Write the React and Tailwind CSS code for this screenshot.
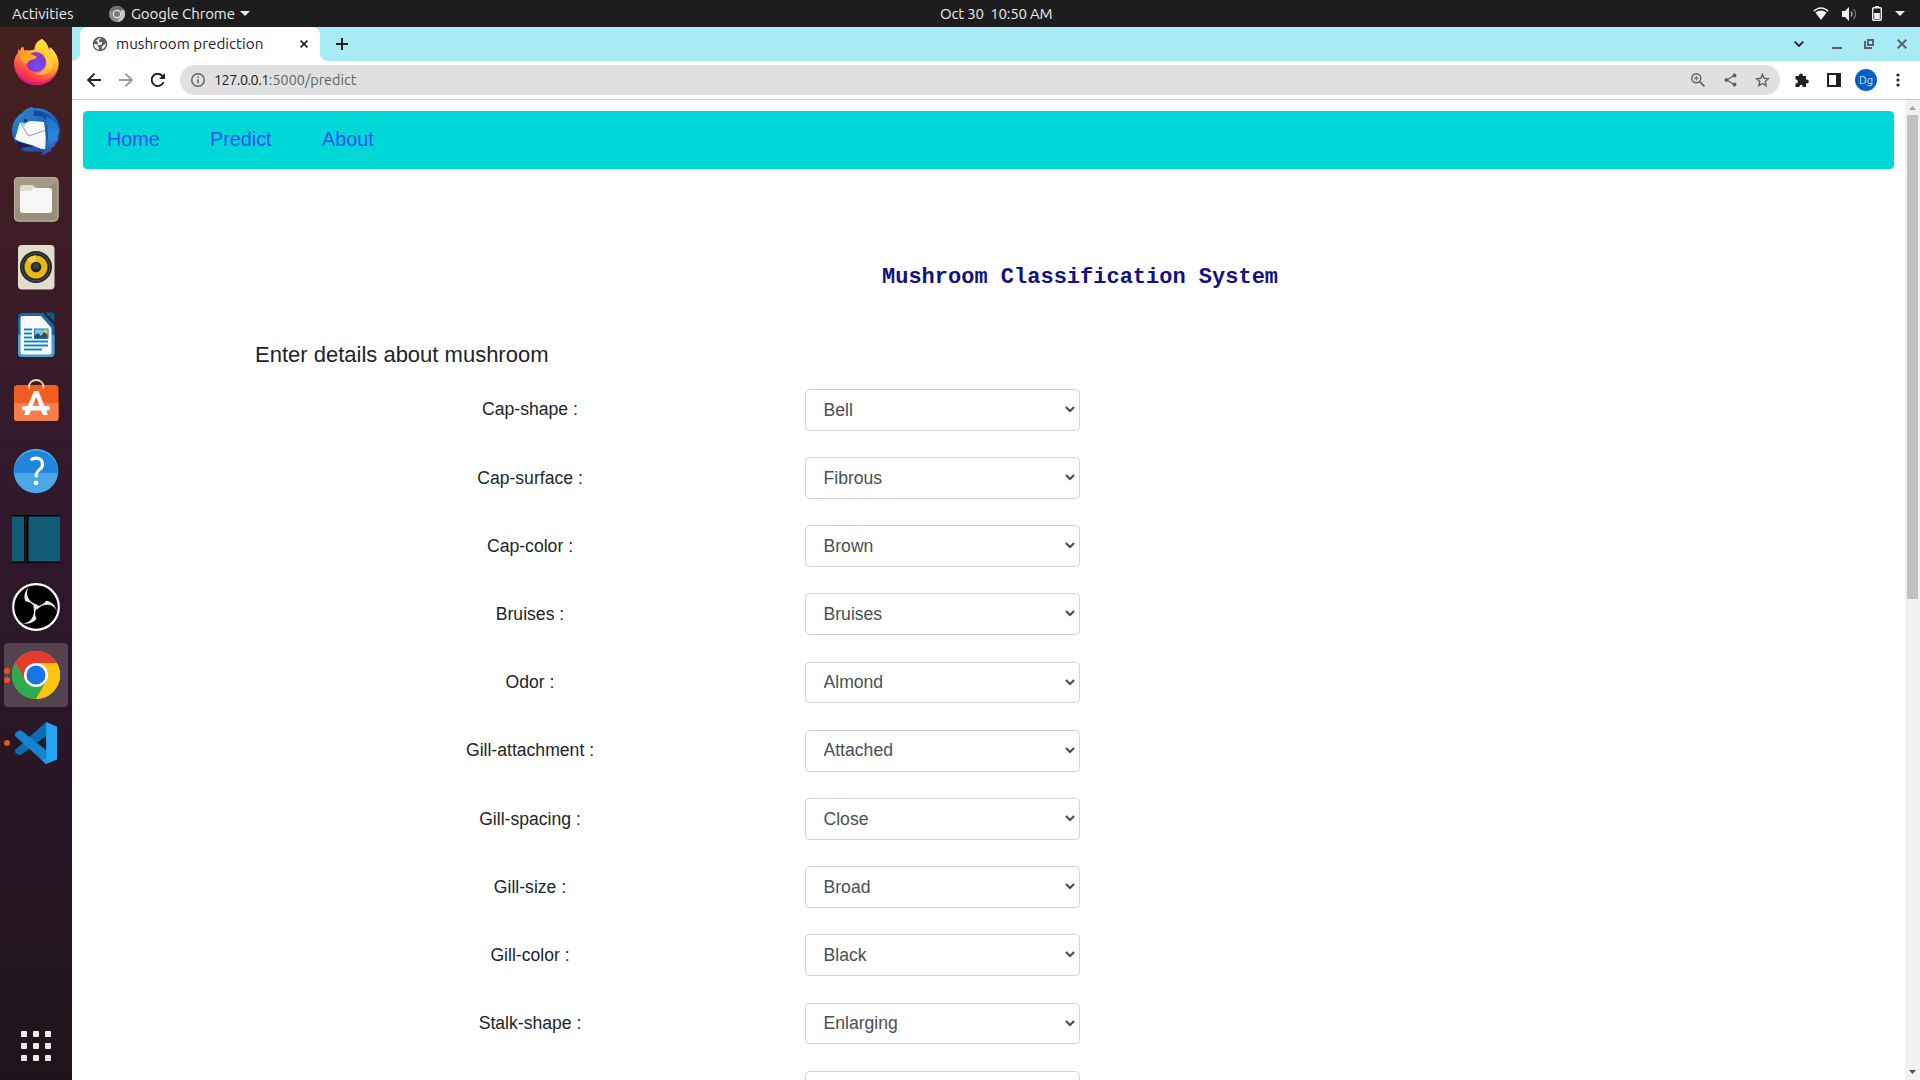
import React from "react";

const fields = [
  ["Cap-shape :", "Bell"],
  ["Cap-surface :", "Fibrous"],
  ["Cap-color :", "Brown"],
  ["Bruises :", "Bruises"],
  ["Odor :", "Almond"],
  ["Gill-attachment :", "Attached"],
  ["Gill-spacing :", "Close"],
  ["Gill-size :", "Broad"],
  ["Gill-color :", "Black"],
  ["Stalk-shape :", "Enlarging"],
  ["", ""],
];

function Svg({ size = 48, w, h, box = "0 0 48 48", className = "", children }) {
  return (
    <svg width={w || size} height={h || size} viewBox={box} fill="none" className={"block shrink-0 " + className}>
      {children}
    </svg>
  );
}

function Firefox() {
  return (
    <Svg>
      <defs>
        <linearGradient id="ffBody" x1="0.8" y1="0.1" x2="0.3" y2="1">
          <stop offset="0" stopColor="#fff04a" />
          <stop offset="0.3" stopColor="#ffbd2f" />
          <stop offset="0.6" stopColor="#ff7139" />
          <stop offset="0.82" stopColor="#ff3750" />
          <stop offset="1" stopColor="#e01586" />
        </linearGradient>
        <radialGradient id="ffGlobe" cx="0.6" cy="0.7" r="0.7">
          <stop offset="0" stopColor="#7a4bff" />
          <stop offset="0.6" stopColor="#7c3ad6" />
          <stop offset="1" stopColor="#a232c0" />
        </radialGradient>
        <linearGradient id="ffHead" x1="0" y1="0" x2="1" y2="1">
          <stop offset="0" stopColor="#ff9a1f" />
          <stop offset="1" stopColor="#ffb52e" />
        </linearGradient>
      </defs>
      <path d="M30 0c4 3 6 6 7 11l1-3c5 4 9 11 8.600 17C46 38 36 46 24.500 46 12 46 2 36.500 2 24c0-5 2-8 4-10l.2-4 2 2c.3-2 1.400-3.600 2.800-4.500l1.500 4.500c2-.8 3-.8 5.500-.5l4.500-1c0-2 .6-4.500 2-6.500 1.400-2 3-3 5.500-4z" fill="url(#ffBody)" />
      <circle cx="24" cy="23" r="10" fill="url(#ffGlobe)" />
      <path d="M8.500 12c3-1 6-.6 8.500.8 1.500 2.500 5 3.700 8 5-1 1.800-3 2.600-5 3-3 .6-4.500 2-5 4.200C10 24 7 18 8.500 12z" fill="url(#ffHead)" />
      <path d="M24.500 12.600c5-1 9.500 1 12 6-3-2-4.500-2-5.500-2 3 2 4 6 3.300 9.500C33 32 28 35 22 33.500c5 4 15 3 18.500-4.500C43 22 40 14 37 11 36 6 33 2 30 0c-4 2.500-6 7-5.500 12.600z" fill="#ffd53c" opacity="0.65" />
      <path d="M3 29c3 8 11 14 21 14s18-5 21-12c-2 9-11 15-21 15S4 39 3 29z" fill="#e5167c" opacity="0.7" />
    </Svg>
  );
}

function Thunderbird() {
  return (
    <Svg>
      <defs>
        <linearGradient id="tbBlue" x1="0.2" y1="0" x2="0.8" y2="1">
          <stop offset="0" stopColor="#2f8fd8" />
          <stop offset="0.5" stopColor="#1a62b8" />
          <stop offset="1" stopColor="#2b3f98" />
        </linearGradient>
        <linearGradient id="tbWing" x1="0" y1="0" x2="0" y2="1">
          <stop offset="0" stopColor="#1673cf" />
          <stop offset="0.55" stopColor="#2a8ad6" />
          <stop offset="1" stopColor="#2a4aa8" />
        </linearGradient>
      </defs>
      <path d="M20 0l2 1.500C35 0 48 10 48 24c0 9-4 14-8 17l-1 3-3 1-2 2-5 1 2-3C20 44 10 46 8 42l6 2C5 39 0 32 0 24 0 15 5 9 10 6 12 3 16 1 20 0z" fill="url(#tbBlue)" />
      <path d="M14 5C25 1 39 6 43 16l-2 5-3-4c-4-7-11-9-18-8z" fill="#154aa0" />
      <path d="M34 9c8 3 12 9 13 14l-2 8 1 2-4 4 1 2-4 2v3l-4 1-1 2-5 1c5-6 7-13 7-20 0-7-1-13-2-19z" fill="url(#tbWing)" />
      <path d="M3 32L8 15c4 1 8-1 12-1l12 1 1 7c1 8 1 14 0 20-3 1-8-2-13-4C13 36 7 35 3 32z" fill="#f7f7f8" />
      <path d="M8 15l8.500 14L33 23.500" stroke="#9b9ba2" strokeWidth="1" />
      <path d="M9 15c0-5 4-11 10-13 6 3 3 11-9 16z" fill="#2878c4" />
      <path d="M9 15l5 2-3 5z" fill="#9ddcf5" />
      <circle cx="13.500" cy="13.500" r="1.400" fill="#16294e" />
      <path d="M3 33c5 3 11 3 18 7-7 0-10 0-13 2z" fill="#201d52" />
    </Svg>
  );
}

function Files() {
  return (
    <Svg>
      <rect x="2" y="2" width="44.500" height="44.500" rx="4.500" fill="#a39b86" />
      <path d="M2 36L46 6v36a4.500 4.500 0 0 1-4.500 4.500h-35A4.500 4.500 0 0 1 2 42z" fill="#968e79" />
      <rect x="2.500" y="2.500" width="43.500" height="43.500" rx="4" stroke="#b9b29f" strokeWidth="1" />
      <path d="M8 13c0-1.700 1-3 3-3h9c2 0 2.500 3 4 3h13c2 0 3 1 3 3v8H8z" fill="#dedacd" />
      <path d="M8 17.500c0-1 .8-1.500 2-1.500h8c2 0 2-3 4.500-3H37c2 0 3 1 3 3v19c0 2-1 3-3 3H11c-2 0-3-1-3-3z" fill="#f8f7f5" />
    </Svg>
  );
}

function Rhythmbox() {
  return (
    <Svg>
      <rect x="6" y="2" width="36.500" height="44.500" rx="4" fill="#e3ddd0" />
      <circle cx="24" cy="24" r="16" fill="#23252a" />
      <circle cx="24" cy="24" r="14" stroke="#50545c" strokeWidth="1" />
      <circle cx="24" cy="24" r="11.500" fill="#e7b714" />
      <path d="M24 24L15 16.500a11.500 11.500 0 0 1 9-4z" fill="#f2d24b" />
      <circle cx="24" cy="24" r="5.300" fill="#1f2125" />
      <circle cx="24" cy="23" r="3.300" fill="#3b3e43" />
    </Svg>
  );
}

function Writer() {
  return (
    <Svg>
      <path d="M10 2h21l11.500 13v27a4 4 0 0 1-4 4H10a4 4 0 0 1-4-4V6a4 4 0 0 1 4-4z" fill="#0f6ca3" />
      <path d="M6 24h36.500v18a4 4 0 0 1-4 4H10a4 4 0 0 1-4-4z" fill="#4a9fd0" />
      <path d="M10.500 5H29l10.500 12v24.500a2 2 0 0 1-2 2h-27a2 2 0 0 1-2-2V7a2 2 0 0 1 2-2z" fill="#fafafa" />
      <path d="M33 1.500h7a2.500 2.500 0 0 1 2.500 2.500v7z" fill="#0b5c90" />
      <path d="M12 18.500h8M12 22.500h8M12 26.500h8M12 30.500h24M12 34.500h24M12 38.500h18" stroke="#1a84bf" strokeWidth="1.900" />
      <rect x="22.500" y="18" width="13.500" height="9.500" fill="#7cc3ec" stroke="#1a78b0" />
      <path d="M23 27v-3l3-2 3 3 3-4 3.500 3v3z" fill="#364c58" />
      <rect x="32.500" y="18.500" width="3" height="3" fill="#f5c527" />
    </Svg>
  );
}

function Software() {
  return (
    <Svg>
      <g transform="translate(0 2)">
        <rect x="2" y="4" width="44.500" height="36" rx="3.500" fill="#f15d22" />
        <path d="M2 22h44.500v14.500A3.500 3.500 0 0 1 43 40H5.500A3.500 3.500 0 0 1 2 36.500z" fill="#f47f4b" />
        <path d="M17 7.500V5.500a7.200 6.500 0 0 1 14.400 0v2" stroke="#ecd9a8" strokeWidth="1.900" />
        <path d="M22 10h4.500l9.500 24h-5L24.200 16 17 34h-5z" fill="#fff" />
        <rect x="10" y="25" width="28" height="4.500" rx="2" fill="#fff" />
      </g>
    </Svg>
  );
}

function Help() {
  return (
    <Svg>
      <circle cx="24" cy="24" r="22.300" fill="#4ba7e8" />
      <path d="M1.700 26a22.300 22.300 0 1 1 44.600 0z" fill="#1f86dc" />
      <path d="M18.500 13c3-2 6-2.300 8.500-1.300 4.500 2 4.500 7.500 1 10.500-2.500 2.300-4 3-4 8" stroke="#fff" strokeWidth="3.100" />
      <circle cx="24" cy="35.800" r="2.400" fill="#fff" />
    </Svg>
  );
}

function Panes() {
  return (
    <Svg>
      <rect width="48" height="48" fill="#000" />
      <rect y="1.500" width="12" height="45" fill="#125b75" />
      <rect x="13.300" width="1.400" height="48" fill="#30182b" />
      <rect x="16.500" y="1.500" width="31.500" height="45" fill="#125b75" />
    </Svg>
  );
}

function Obs() {
  const blade = "M18 3C12 8 11.500 14 13.500 18.500 17 18.500 21 20.500 23 25l3-3C20 20.500 15 16 15 10c0-3 1-5 3-7z";
  return (
    <Svg>
      <circle cx="24" cy="24" r="22.800" fill="#000" stroke="#fff" strokeWidth="2.200" />
      <g fill="#ecebed">
        <path d={blade} />
        <path d={blade} transform="rotate(120 24 24)" />
        <path d={blade} transform="rotate(240 24 24)" />
        <circle cx="24" cy="24" r="2" />
      </g>
    </Svg>
  );
}

function Chrome() {
  return (
    <Svg>
      <circle cx="24" cy="24" r="24" fill="#fbbc05" />
      <path d="M3.200 12A24 24 0 0 1 44.800 12H24L13.600 30z" fill="#e33b2e" />
      <path d="M3.200 12A24 24 0 0 0 24 48L34.400 30H24L13.600 30z" fill="#2da94f" />
      <path d="M24 48L34.400 30 36 24 24 12H44.800A24 24 0 0 1 24 48z" fill="#fcc312" />
      <circle cx="24" cy="24" r="12" fill="#fff" />
      <circle cx="24" cy="24" r="9.500" fill="#1a73e8" />
    </Svg>
  );
}

function VsCode() {
  return (
    <Svg>
      <path d="M34 3L7 27.500l-4 3v3l3.500 2.500 3-.5L34 17z" fill="#0a6cb5" />
      <path d="M34 45L3 17v-3l4-2.800L10 12 34 31z" fill="#1583cf" />
      <path d="M34 3l11 4.500v33L34 45z" fill="#27a4f2" />
      <path d="M34 3l1 0v42h-1l-4-3.500 4-3z" fill="#1f95e0" />
    </Svg>
  );
}

const dock = [
  { Icon: Firefox, dots: 0 },
  { Icon: Thunderbird, dots: 0 },
  { Icon: Files, dots: 0 },
  { Icon: Rhythmbox, dots: 0 },
  { Icon: Writer, dots: 0 },
  { Icon: Software, dots: 0 },
  { Icon: Help, dots: 0 },
  { Icon: Panes, dots: 0 },
  { Icon: Obs, dots: 0 },
  { Icon: Chrome, dots: 2, active: true },
  { Icon: VsCode, dots: 1 },
];

function Dock() {
  return (
    <aside className="flex w-[72px] shrink-0 flex-col justify-between bg-linear-to-b from-[#47201f] via-[#30182c] via-45% to-[#20141c] px-1 pt-1 pb-[19px]">
      <div className="flex flex-col gap-1">
        {dock.map(({ Icon, dots, active }, i) => (
          <div key={i} className={"relative flex size-16 items-center justify-center rounded " + (active ? "bg-[#54424f]" : "")}>
            <Icon />
            <div className="absolute inset-y-0 left-0 flex flex-col justify-center gap-[3px]">
              {Array.from({ length: dots }, (_, d) => (
                <span key={d} className="size-1.5 rounded-full bg-[#e95420]" />
              ))}
            </div>
          </div>
        ))}
      </div>
      <div className="grid grid-cols-3 gap-1.5 self-center">
        {Array.from({ length: 9 }, (_, i) => (
          <span key={i} className="size-1.5 rounded-[1px] bg-[#efefec]" />
        ))}
      </div>
    </aside>
  );
}

function TopBar() {
  return (
    <header className="flex h-[27px] shrink-0 items-center bg-[#1d1d1d] pl-3 text-[15px] leading-none text-[#ececec]">
      <span className="w-[97px]">Activities</span>
      <Svg size={16} box="0 0 16 16">
        <circle cx="8" cy="8" r="8" fill="#8b8b8b" />
        <path d="M8 8L1 4a8 8 0 0 1 14 0z" fill="#6f6f6f" />
        <path d="M8 16l4-6V4h3a8 8 0 0 1-7 12z" fill="#c4c4c4" />
        <circle cx="8" cy="8" r="4.200" fill="#e8e8e8" />
        <circle cx="8" cy="8" r="3" fill="#777" />
      </Svg>
      <span className="ml-1.5 w-[109px] tracking-[-0.1px] whitespace-nowrap">Google Chrome</span>
      <Svg w={10} h={5} box="0 0 10 5"><path d="M0 0h10L5 5z" fill="#ececec" /></Svg>
      <span className="ml-[690px] tracking-[-0.2px] whitespace-pre">Oct 30  10:50 AM</span>
      <div className="ml-auto flex items-center pr-[15px]">
        <Svg w={16} h={13} box="0 0 16 13" className="mr-[13px]">
          <path d="M.8 4.200C5-.2 11-.2 15.200 4.200" stroke="#ececec" strokeWidth="1.500" />
          <path d="M8 13L2.500 5.800c3.500-3 7.500-3 11 0z" fill="#f2f2f2" />
        </Svg>
        <Svg w={15} h={14} box="0 0 15 14" className="mr-[15px]">
          <path d="M0 4h3l4-4v14l-4-4H0z" fill="#f2f2f2" />
          <path d="M9 4.500c1.300 1.500 1.300 3.500 0 5" stroke="#bbb" strokeWidth="1.200" />
          <path d="M11.500 2c2.600 3 2.600 7 0 10" stroke="#777" strokeWidth="1.200" />
        </Svg>
        <Svg w={10} h={15} box="0 0 10 15" className="mr-[13px]">
          <rect x="0.700" y="1.700" width="8.600" height="12.600" rx="1" stroke="#f2f2f2" strokeWidth="1.400" />
          <rect x="3" y="0" width="4" height="2" fill="#f2f2f2" />
          <rect x="2.200" y="7" width="5.600" height="6" fill="#f2f2f2" />
        </Svg>
        <Svg w={10} h={5} box="0 0 10 5"><path d="M0 0h10L5 5z" fill="#ececec" /></Svg>
      </div>
    </header>
  );
}

function TabStrip() {
  return (
    <div className="flex h-[34px] shrink-0 items-center bg-[#a9ebf4] text-[#202124]">
      <Svg w={8} h={8} box="0 0 8 8" className="self-end"><path d="M8 0v8H0a8 8 0 0 0 8-8z" fill="#fff" /></Svg>
      <div className="flex h-full w-[240px] items-center rounded-t-lg bg-white pl-3">
        <Svg size={16} box="0 0 16 16">
          <circle cx="8" cy="8" r="7.300" fill="#5f6368" />
          <path d="M9.500 2.200L7 4v2l3 .2v2L8.200 9H4.800l2 2v3C4 13 1.900 11 1.900 8l3 .6 1.600-1.200-1-1.600L4 4.800 7 2.500zM11 9.500l2.800-2c0 3-1.200 4.500-3.800 6L9.800 11z" fill="#fff" />
        </Svg>
        <span className="ml-2 w-[184px] text-[15.2px] leading-none tracking-[0.02px] whitespace-nowrap">mushroom prediction</span>
        <Svg size={8} box="0 0 8 8"><path d="M.6.6l6.800 6.800M7.400.6L.6 7.400" stroke="#202124" strokeWidth="1.700" /></Svg>
      </div>
      <Svg w={8} h={8} box="0 0 8 8" className="self-end"><path d="M0 0v8h8a8 8 0 0 1-8-8z" fill="#fff" /></Svg>
      <Svg size={12} box="0 0 12 12" className="ml-2"><path d="M6 0v12M0 6h12" stroke="#202124" strokeWidth="2" /></Svg>
      <div className="ml-auto flex items-center pr-[13px]">
        <Svg w={10} h={6} box="0 0 10 6" className="mr-7"><path d="M.7.7L5 5 9.300.7" stroke="#202124" strokeWidth="1.800" /></Svg>
        <span className="mt-2 mr-[22px] h-0.5 w-2.5 bg-[#5f6368]" />
        <Svg size={10} box="0 0 10 10" className="mr-[23px]">
          <path d="M1 2v7h7M4 1h5v5H4z" stroke="#5f6368" strokeWidth="2" />
        </Svg>
        <Svg size={10} box="0 0 10 10"><path d="M.7.7l8.600 8.600M9.300.7L.7 9.300" stroke="#5f6368" strokeWidth="2" /></Svg>
      </div>
    </div>
  );
}

function Toolbar() {
  return (
    <div className="flex h-[39px] shrink-0 items-center border-b border-[#c6c8c9] bg-white pl-[15px] text-[#202124]">
      <Svg size={14} box="0 0 14 14"><path d="M14 7H1.500M7.500.7L1.200 7l6.300 6.300" stroke="#202124" strokeWidth="1.900" /></Svg>
      <Svg size={14} box="0 0 14 14" className="ml-[18px]"><path d="M0 7h12.500M6.500.7L12.800 7l-6.300 6.300" stroke="#9b9c9e" strokeWidth="1.900" /></Svg>
      <Svg size={14} box="0 0 14 14" className="ml-[18px]">
        <path d="M12.500 9A6.100 6.100 0 1 1 11.300 2.800L13 4.500" stroke="#202124" strokeWidth="1.900" />
        <path d="M14 0v6H8z" fill="#202124" />
      </Svg>
      <div className="ml-[15px] flex h-[30px] w-[1600px] items-center rounded-full bg-[#e0e0e0] pl-[11px]">
        <Svg size={14} box="0 0 14 14">
          <circle cx="7" cy="7" r="6.300" stroke="#5f6368" strokeWidth="1.400" />
          <path d="M7 6.200v4M7 3.600v1.500" stroke="#5f6368" strokeWidth="1.600" />
        </Svg>
        <span className="ml-[9px] text-[14.4px] leading-none tracking-[-0.5px]">127.0.0.1<span className="tracking-[0.02px] text-[#5f6368]">:5000/predict</span></span>
        <div className="ml-auto flex items-center pr-[10px]">
          <Svg size={14} box="0 0 14 14" className="mr-[19px]">
            <circle cx="5.300" cy="5.300" r="4.500" stroke="#5f6368" strokeWidth="1.400" />
            <path d="M8.700 8.700l4.700 4.700" stroke="#5f6368" strokeWidth="1.700" />
            <path d="M5.300 3v4.600M3 5.300h4.600" stroke="#5f6368" strokeWidth="1.100" />
          </Svg>
          <Svg w={13} h={14} box="0 0 13 14" className="mr-[18px]">
            <path d="M10.500 2.500L2.500 7l8 4.500" stroke="#5f6368" strokeWidth="1.200" />
            <g fill="#5f6368"><circle cx="10.500" cy="2.500" r="2" /><circle cx="2.300" cy="7" r="2" /><circle cx="10.500" cy="11.500" r="2" /></g>
          </Svg>
          <Svg w={15} h={14} box="0 0 15 14">
            <path d="M7.500 1.400l1.700 3.900 4.200.4-3.200 2.800.9 4.200-3.600-2.200-3.600 2.200.9-4.200L1.600 5.700l4.200-.4z" stroke="#5f6368" strokeWidth="1.400" />
          </Svg>
        </div>
      </div>
      <Svg size={15} box="0 0 15 15" className="ml-[14px]">
        <path d="M5 2.500a1.900 1.900 0 0 1 3.800 0V3H12v3.500h.8a2 2 0 0 1 0 4H12V14H8.800v-.6a1.700 1.700 0 0 0-3.400 0v.6H1.500v-3.600H2a1.900 1.900 0 0 0 0-3.800h-.5V3H5z" fill="#202124" />
      </Svg>
      <Svg size={14} box="0 0 14 14" className="ml-[18px]"><path d="M0 0h14v14H0zM2 2v10h7V2z" fill="#202124" fillRule="evenodd" /></Svg>
      <span className="ml-[14px] flex size-[22px] items-center justify-center rounded-full bg-[#0560c2] text-[11px] leading-none text-[#cfe2f7]">Dg</span>
      <Svg w={4} h={14} box="0 0 4 14" className="ml-[19px]">
        <g fill="#202124"><circle cx="2" cy="2" r="1.600" /><circle cx="2" cy="7" r="1.600" /><circle cx="2" cy="12" r="1.600" /></g>
      </Svg>
    </div>
  );
}

function Page() {
  return (
    <div className="flex min-h-0 flex-1 bg-white font-['Liberation_Sans',Arial,sans-serif] text-[17.6px] leading-[26.4px] text-[#212529]">
      <main className="min-w-0 flex-1 overflow-hidden pt-[11px] pr-[11px] pl-[11px]">
        <nav className="flex h-[58px] items-center rounded-[4.4px] bg-[#00d8d8] px-6 pb-[2px] text-[19.8px] text-[#2a52f5]">
          <a className="w-[103px]">Home</a>
          <a className="w-[112px]">Predict</a>
          <a>About</a>
        </nav>
        <div className="pl-[172px]">
          <h1 className="mt-24 pl-[627px] font-['Liberation_Mono','Courier_New',monospace] text-[22px] font-bold text-[#12127f]">Mushroom Classification System</h1>
          <p className="mt-[51px] mb-5 text-[22px]">Enter details about mushroom</p>
          <form className="flex flex-col gap-[26.4px]">
            {fields.map(([label, value], i) => (
              <div key={i} className="grid h-[41.8px] grid-cols-[550px_275px]">
                <label className="pt-[7.6px] text-center">{label}</label>
                <div className="relative">
                  <select className="h-[41.8px] w-full appearance-none rounded-[4.4px] border border-[#ced4da] bg-white py-[6.6px] pr-5 pl-[17.5px] text-[17.6px] text-[#495057]">
                    <option>{value}</option>
                  </select>
                  <Svg w={10} h={7} box="0 0 10 7" className="pointer-events-none absolute top-[17px] right-[5px]">
                    <path d="M.9 1L5 5 9.100 1" stroke="#495057" strokeWidth="2.200" />
                  </Svg>
                </div>
              </div>
            ))}
          </form>
        </div>
      </main>
      <div className="flex w-[15px] shrink-0 flex-col items-center bg-[#f1f1f1] pt-1.5 pb-1.5">
        <Svg w={7} h={4} box="0 0 7 4"><path d="M0 4h7L3.500 0z" fill="#a3a3a3" /></Svg>
        <div className="mt-[5px] h-[484px] w-[11px] bg-[#c1c1c1]" />
        <Svg w={7} h={4} box="0 0 7 4" className="mt-auto"><path d="M0 0h7L3.500 4z" fill="#505050" /></Svg>
      </div>
    </div>
  );
}

export default function App() {
  return (
    <div className="flex h-[1080px] w-[1920px] flex-col overflow-hidden font-['Ubuntu','Noto_Sans',sans-serif]">
      <TopBar />
      <div className="flex min-h-0 flex-1">
        <Dock />
        <div className="flex min-w-0 flex-1 flex-col">
          <TabStrip />
          <Toolbar />
          <Page />
        </div>
      </div>
    </div>
  );
}
